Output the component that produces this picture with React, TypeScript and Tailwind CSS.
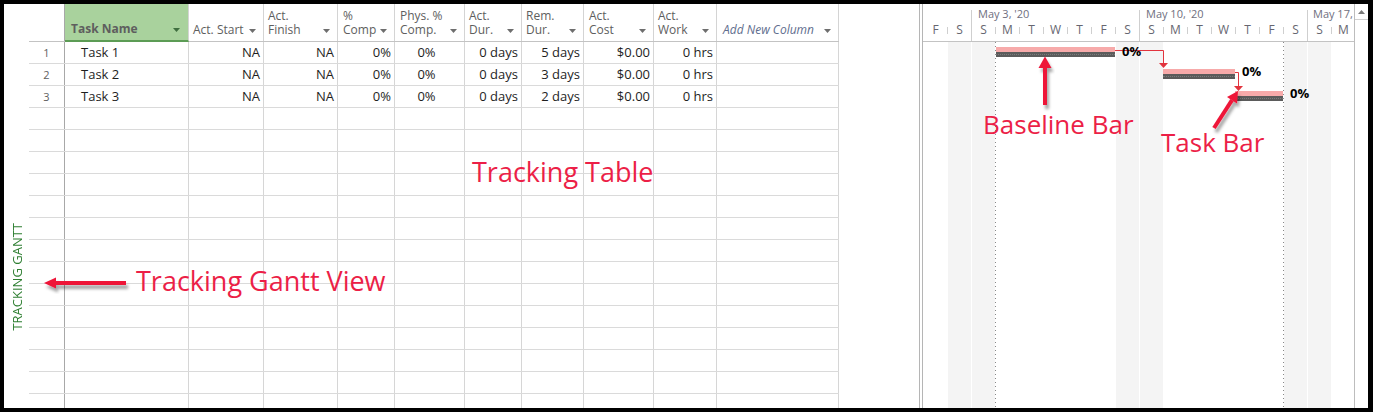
import React from "react";

type HCol = {
  w: string;
  lines: string[];
  pl: string;
  cls?: string;
  caret?: string;
  pr?: string;
};

const headerCols: HCol[] = [
  { w: "w-[124px]", lines: ["Task Name"], pl: "pl-[6px]", pr: "pr-[8px]", cls: "bg-[#a9d29d] font-bold text-[#2e6b2e] border-b-2 border-b-[#5c9c55] -mb-px z-10", caret: "#3f6e3f" },
  { w: "w-[75px]", lines: ["Act. Start"], pl: "pl-[4px]" },
  { w: "w-[74px]", lines: ["Act.", "Finish"], pl: "pl-[4px]" },
  { w: "w-[57px]", lines: ["%", "Comp"], pl: "pl-[5px]" },
  { w: "w-[70px]", lines: ["Phys. %", "Comp."], pl: "pl-[5px]" },
  { w: "w-[57px]", lines: ["Act.", "Dur."], pl: "pl-[4px]" },
  { w: "w-[62px]", lines: ["Rem.", "Dur."], pl: "pl-[4px]" },
  { w: "w-[70px]", lines: ["Act.", "Cost"], pl: "pl-[5px]" },
  { w: "w-[63px]", lines: ["Act.", "Work"], pl: "pl-[4px]" },
  { w: "w-[122px]", lines: ["Add New Column"], pl: "pl-[6px]", cls: "italic text-[#5f6e8e]" },
];

const dataCellCls = [
  "w-[124px] pl-[16px] text-left",
  "w-[75px] pr-[3px] text-right",
  "w-[74px] pr-[3px] text-right",
  "w-[57px] pr-[3px] text-right",
  "w-[70px] pr-[6px] text-center",
  "w-[57px] pr-[3px] text-right",
  "w-[62px] pr-[3px] text-right",
  "w-[70px] pr-[3px] text-right",
  "w-[63px] pr-[3px] text-right",
  "w-[122px]",
];

const rows: string[][] = [
  ["Task 1", "NA", "NA", "0%", "0%", "0 days", "5 days", "$0.00", "0 hrs", ""],
  ["Task 2", "NA", "NA", "0%", "0%", "0 days", "3 days", "$0.00", "0 hrs", ""],
  ["Task 3", "NA", "NA", "0%", "0%", "0 days", "2 days", "$0.00", "0 hrs", ""],
];

const emptyRows = Array.from({ length: 14 }, () => ["", "", "", "", "", "", "", "", "", ""]);

const days = ["F", "S", "S", "M", "T", "W", "T", "F", "S", "S", "M", "T", "W", "T", "F", "S", "S", "M"];
const weekend = new Set([1, 2, 8, 9, 15, 16]);
const weekStart = new Set([2, 9, 16]);
const dotted = new Set([3, 15]);

function Caret({ color = "#6e6e6e" }: { color?: string }) {
  return (
    <svg width="7" height="4" viewBox="0 0 7 4" className="mb-[4px] shrink-0">
      <path d="M0 0H7L3.5 4Z" fill={color} />
    </svg>
  );
}

function GanttBar({ left, width, top }: { left: string; width: string; top: string }) {
  return (
    <div className={`absolute ${left} ${width} ${top} flex flex-col`}>
      <div className="h-[5px] bg-[#f7aaaa]" />
      <div className="h-[5px] bg-[#5b5b5b] pt-[2px]">
        <div className="border-t border-dotted border-[#7c7c7c]" />
      </div>
    </div>
  );
}

export default function App() {
  return (
    <div className="relative w-[1373px] h-[412px] bg-black pt-[4px] pl-[4px] pr-[5px] pb-[4px] font-['Open_Sans',sans-serif] overflow-hidden">
      <div className="flex h-full bg-white overflow-hidden">
        {/* vertical view label */}
        <div className="w-[25px] shrink-0 flex justify-center pt-[219px]">
          <span className="[writing-mode:vertical-rl] rotate-180 text-[13px] leading-[14px] text-[#2f7f32] whitespace-nowrap h-fit">
            TRACKING GANTT
          </span>
        </div>

        {/* table */}
        <div className="w-[810px] shrink-0 flex flex-col overflow-hidden">
          <div className="flex h-[38px] shrink-0 border-b border-[#c3c3c3]">
            <div className="w-[36px] shrink-0 border-r border-[#a8a8a8]" />
            {headerCols.map((c, i) => (
              <div
                key={i}
                className={`${c.w} shrink-0 relative flex items-end border-r border-[#d4d4d4] pb-[4px] ${c.pl} ${c.pr ?? "pr-[7px]"} text-[12px] leading-[14px] text-[#5e5e5e] ${c.cls ?? ""}`}
              >
                <div className="flex-1 whitespace-nowrap">
                  {c.lines.map((l, j) => (
                    <div key={j}>{l}</div>
                  ))}
                </div>
                <Caret color={c.caret} />
              </div>
            ))}
          </div>
          <div className="flex-1 overflow-hidden">
            {[...rows, ...emptyRows].map((r, i) => (
              <div key={i} className="flex h-[22px] border-b border-[#dadada]">
                <div className="w-[36px] shrink-0 border-r border-[#a8a8a8] text-center text-[11px] leading-[21px] text-[#5e5e5e] pb-[2px]">
                  {i < 3 ? i + 1 : ""}
                </div>
                {r.map((v, j) => (
                  <div
                    key={j}
                    className={`${dataCellCls[j]} shrink-0 border-r border-[#d6d6d6] text-[13px] leading-[21px] text-[#1e1e1e] whitespace-nowrap`}
                  >
                    {v}
                  </div>
                ))}
              </div>
            ))}
          </div>
        </div>

        {/* empty area + splitter */}
        <div className="w-[80px] shrink-0" />
        <div className="w-[4px] shrink-0 border-x border-[#b5b5b5]" />

        {/* gantt */}
        <div className="w-[431px] shrink-0 flex flex-col overflow-hidden">
          <div className="h-[38px] shrink-0 border-b border-[#c3c3c3] flex flex-col">
            <div className="h-[18px] flex text-[11px] leading-[12px] text-[#6f6f80]">
              <div className="w-[48px] shrink-0" />
              <div className="w-[168px] shrink-0 mt-[6px] h-[12px] border-l border-[#cfcfcf] pl-[6px] whitespace-nowrap">
                <div className="-mt-[2px]">May 3, &apos;20</div>
              </div>
              <div className="w-[168px] shrink-0 mt-[6px] h-[12px] border-l border-[#cfcfcf] pl-[6px] whitespace-nowrap">
                <div className="-mt-[2px]">May 10, &apos;20</div>
              </div>
              <div className="flex-1 mt-[6px] h-[12px] border-l border-[#cfcfcf] pl-[5px] whitespace-nowrap">
                <div className="-mt-[2px]">May 17,</div>
              </div>
            </div>
            <div className="flex-1 flex">
              {days.map((d, i) => (
                <div key={i} className="w-[24px] shrink-0 flex items-start h-full">
                  {i === 0 ? (
                    <div className="w-px" />
                  ) : weekStart.has(i) ? (
                    <div className="w-px h-full bg-[#cfcfcf]" />
                  ) : (
                    <div className="w-px h-[7px] mt-[5px] bg-[#cfcfcf]" />
                  )}
                  <div className="flex-1 text-center text-[12px] leading-[15px] text-[#666670]">{d}</div>
                </div>
              ))}
            </div>
          </div>

          <div className="flex-1 relative flex">
            {days.map((_, i) => (
              <div key={i} className="w-[24px] shrink-0 h-full flex">
                {dotted.has(i) ? (
                  <div className="w-px h-full bg-[repeating-linear-gradient(to_bottom,#888888_0px,#888888_1px,transparent_1px,transparent_4px)]" />
                ) : (
                  <div className={`w-px h-full ${weekend.has(i) ? "bg-white" : ""}`} />
                )}
                <div className={`flex-1 h-full ${weekend.has(i) ? "bg-[#f4f4f4]" : ""}`} />
              </div>
            ))}

            <GanttBar left="left-[73px]" width="w-[119px]" top="top-[5px]" />
            <GanttBar left="left-[240px]" width="w-[72px]" top="top-[27px]" />
            <GanttBar left="left-[312px]" width="w-[48px]" top="top-[49px]" />

            <svg className="absolute left-0 top-0" width="431" height="80">
              <path d="M192 8.5H240.5V21" fill="none" stroke="#e2343e" strokeWidth="1" />
              <path d="M236 21H245L240.5 26Z" fill="#e2343e" />
              <path d="M312 30.5H315.5V44" fill="none" stroke="#e2343e" strokeWidth="1" />
              <path d="M311 44H320L315.5 49Z" fill="#e2343e" />
            </svg>

            <div className="absolute left-[199px] top-[3px] text-[13px] leading-[13px] font-bold text-black">0%</div>
            <div className="absolute left-[319px] top-[23px] text-[13px] leading-[13px] font-bold text-black">0%</div>
            <div className="absolute left-[367px] top-[45px] text-[13px] leading-[13px] font-bold text-black">0%</div>
          </div>
        </div>

        {/* scrollbar */}
        <div className="w-[14px] shrink-0 border-l border-[#bdbdbd] flex flex-col">
          <div className="h-[16px] border-b border-[#d0d0d0] flex items-center justify-center">
            <svg width="7" height="4" viewBox="0 0 7 4">
              <path d="M0 4H7L3.5 0Z" fill="#7a7a7a" />
            </svg>
          </div>
        </div>
      </div>

      {/* annotations */}
      <div className="absolute inset-0 pointer-events-none">
        <svg className="absolute left-0 top-0" width="1373" height="412">
          <defs>
            <filter id="sh" x="-20%" y="-50%" width="140%" height="200%">
              <feDropShadow dx="2" dy="4" stdDeviation="1.6" floodColor="#000" floodOpacity="0.35" />
            </filter>
          </defs>
          <g fill="#ee1539" filter="url(#sh)">
            <rect x="54" y="281" width="72" height="4" />
            <path d="M44 283L56 277.5V288.5Z" />
          </g>
          <g fill="#ee1539" filter="url(#sh)">
            <rect x="1043" y="66" width="4" height="39" />
            <path d="M1045 56.5L1051.5 68H1038.5Z" />
          </g>
          <g filter="url(#sh)">
            <line x1="1214" y1="128" x2="1232" y2="100.2" stroke="#ee1539" strokeWidth="4" />
            <path d="M1238 91L1237 103.5L1227 96.9Z" fill="#ee1539" />
          </g>
        </svg>
        <div className="absolute left-[472px] top-[158px] text-[27px] leading-none text-[#ec1f47] whitespace-nowrap">Tracking Table</div>
        <div className="absolute left-[136px] top-[267px] text-[27px] leading-none text-[#ec1f47] whitespace-nowrap">Tracking Gantt View</div>
        <div className="absolute left-[983px] top-[111px] text-[26px] leading-none text-[#ec1f47] whitespace-nowrap">Baseline Bar</div>
        <div className="absolute left-[1161px] top-[129px] text-[26px] leading-none text-[#ec1f47] whitespace-nowrap">Task Bar</div>
      </div>
    </div>
  );
}
